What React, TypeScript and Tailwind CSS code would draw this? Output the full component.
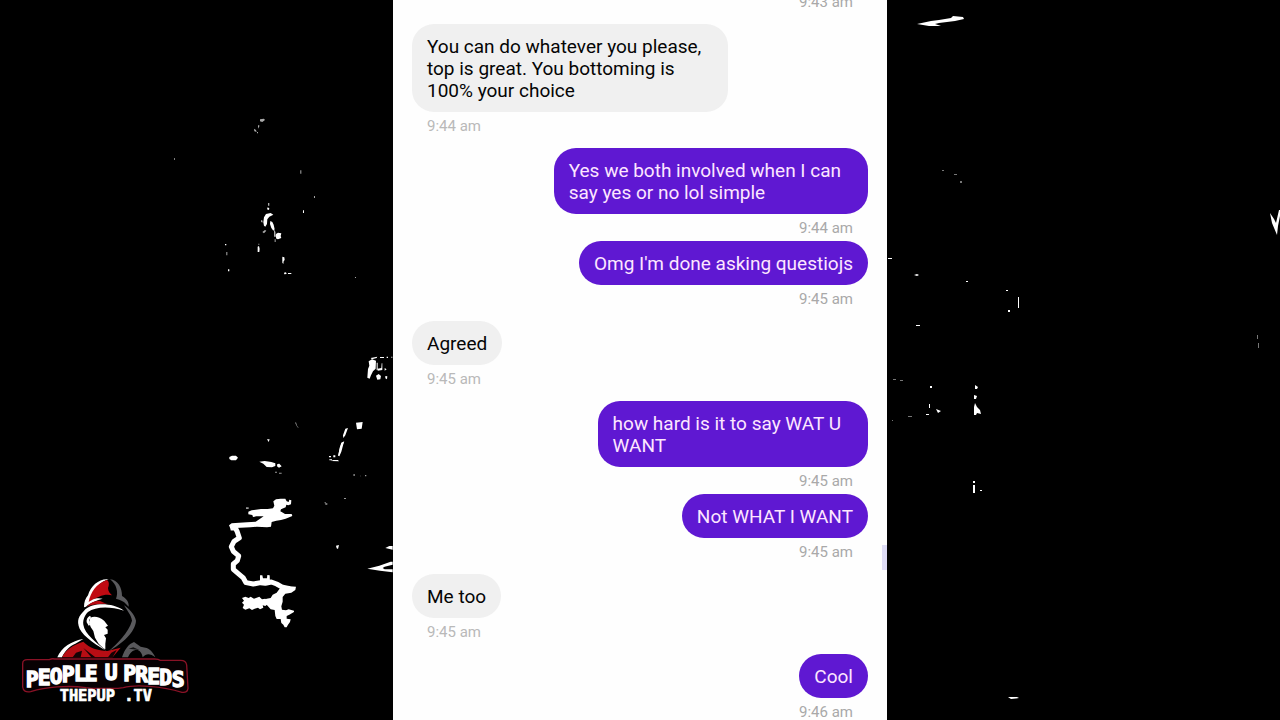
import React from "react";

type Message = { from: "them" | "me"; lines: string[]; time: string };

const messages: Message[] = [
  { from: "them", lines: ["You can do whatever you please,", "top is great. You bottoming is", "100% your choice"], time: "9:44 am" },
  { from: "me", lines: ["Yes we both involved when I can", "say yes or no lol simple"], time: "9:44 am" },
  { from: "me", lines: ["Omg I'm done asking questiojs"], time: "9:45 am" },
  { from: "them", lines: ["Agreed"], time: "9:45 am" },
  { from: "me", lines: ["how hard is it to say WAT U", "WANT"], time: "9:45 am" },
  { from: "me", lines: ["Not WHAT I WANT"], time: "9:45 am" },
  { from: "them", lines: ["Me too"], time: "9:45 am" },
  { from: "me", lines: ["Cool"], time: "9:46 am" },
];

function Time({ children, mine }: { children: string; mine: boolean }) {
  return (
    <time className={`mt-1 mb-[3px] px-[15px] text-[15px] leading-5 ${mine ? "text-[#a9a9a9]" : "text-[#b9b9b9]"}`}>
      {children}
    </time>
  );
}

function Bubble({ message, spaced }: { message: Message; spaced: boolean }) {
  const mine = message.from === "me";
  return (
    <li className={`flex flex-col ${mine ? "items-end" : "items-start"} ${spaced ? "mt-[9px]" : ""}`}>
      <p
        className={`rounded-[22px] pt-3 pb-2.5 pl-[15px] text-[19px] leading-[22px] whitespace-nowrap ${
          message.lines.length > 1 ? "pr-[27px]" : "pr-[15px]"
        } ${mine ? "bg-[#5f18d2] text-[#fde6ff]" : "bg-[#f0f0f0] text-[#050505]"}`}
      >
        {message.lines.map((line, i) => (
          <React.Fragment key={line}>
            {i > 0 && <br />}
            {line}
          </React.Fragment>
        ))}
      </p>
      <Time mine={mine}>{message.time}</Time>
    </li>
  );
}

function Backdrop() {
  return (
    <svg
      aria-hidden="true"
      viewBox="0 0 1280 720"
      preserveAspectRatio="xMidYMid slice"
      className="absolute inset-0 h-full w-full"
      fill="#fff"
    >
      <g transform="translate(210 440) scale(.3333)">
        <path d="M190 184l8-6 14-2 14 0 4 8 6 2 2-7 6 2-1 12-8 3-6-2-2 8-14 6-2 6 8 4 6 4 20 0 2 6-20 8-14 4-14 2-14 4-2 14-12 2-30-2-20 2-44 2-14 6-6-14 8-6 46-3 26-2 12-8 12-8-22 0-10 2-2-6-12-2 0-8 10-4 28-4 20 0 16-2 4-8z" />
        <path
          d="M62 264l14 0 6 12 6 18-16 10-8 16 6 14 16 14-4 14-12 10 0 16 14 12 16 14 8 14 22 4 22-4 14 2 18-4 16 6 18 10 22 4"
          fill="none"
          stroke="#fff"
          strokeWidth="15"
          strokeLinejoin="round"
        />
        <path d="M150 406l7 0 2 9 12 0 1-10 7 1 1 20-30 2zM212 442l16-4 30 2-2 10-12 8-18 3-8 10 0 14 -4 14 2 10 12 2 8-3 16 4 0 4-14 8-8 4 0 8 12 2-2 8-6 8-4 8-6 0-4-8-6-5-2-12-12 0-4-9-2-18-12-2-12-14-10-5 0-8 10-5 12-2 6-10 12-6z" />
        <path d="M96 474l10-4 10 4 6-4 10 6 16-6 8 8 10-2 4 5-4 7 8 4-8 6-8-2 2 7-10 5-6-5-10 3-8 4-8-5-12 4-8-5 4-10-6-6 6-6z" />
        <path d="M58 51l8-4 12 0 6 6-6 8-14 0-6-4zM148 65l16-2 20 3 12 4 0 8-10 4-16-1-10-10zM202 72l6-1 7 8-8 4-6-4zM171-2h8l-3 8zM378 317l9-2-3 12-4-2z" />
        <path d="M395 8l8-4-10 22-4 20-5 2 4-18zM357 48h6v4h-6zM370 46h6v6h-6zM358 58h8v3h-8zM370 60l14 0 3 4-24-1z" />
        <path d="M472 386l36-9 34-12h6v9l-24 6-6 4 6 4 24 0v9l-38-5zM526 324l12-6h10v11z" />
        <path d="M430 103h5v4h-5zM450 107h2v2h-2zM465 105h4v4h-4zM344 186h3v4h-3zM346 190h6v4h-6zM402 174h6v3h-6zM108 202h8v5h-8zM195 95h6v3h-6zM207 98h8v3h-8z" fill="#999" />
      </g>
      <g transform="translate(150 100) scale(.3333)">
        <path d="M342 352l6-10 14-3 8 5-12 6-6 8-1 14-5 8-4-3-2-10zM361 363l6 3 4 8 3 14-4 4-6-8-4-12zM353 322l5 3-1 5-6-2zM378 402l6-4 10 2-2 8 2 6-10 4-5-2-2-8zM373 388l3 8 0 14-3 0zM323 440l4-2 2 8-1 10-5 0zM397 470l6 2 1 8-3 4-1 8-3-4zM402 518l6-1 2 5-7 1zM414 519h10v3h-10zM459 331h3v8h-3zM225 432h4v4h-4zM234 508h4v6h-4z" />
        <path d="M330 58l12-2 3 4-8 6-7-2zM312 86l6 4 2 6-7-2zM324 75l5 2-5 9zM321 96h3v4h-3zM354 309h4v8h-4zM333 360l5 2-1 6-4-3zM337 396l8-6 4 2-7 8zM229 456h3v10h-3zM374 418h3v8h-3zM451 211h3v10h-3zM492 288h3v6h-3zM72 175h3v4h-3zM615 531h3v3h-3zM325 431h3v3h-3z" fill="#aaa" />
      </g>
      <g transform="translate(280 330) scale(.3333)">
        <path d="M266 94l10-6 12 4-1 24-8 8-6 12-4 10-7-3 2-26 4-10zM272 84l20-4-2 4-14 4zM300 81h12v3h-12zM320 80h4v4h-4zM334 80h3v3h-3zM290 98h3v20l-3 3zM293 116l11-2 1-14h2v20l-14 2zM314 114l6 4-6 4zM288 137l8-5 7 6-2 10-9 1zM316 138l6 1-1 9-5-3zM228 278l20-2-3 20-14 2zM196 296l8-2-8 22-6 8-1-8zM184 338l8-3-8 30-6 14-3-2 4-24z" />
        <path d="M45 278l3-1 4 12 5 4-5-1z" fill="#888" />
      </g>
      <path d="M917 24l14-3 8-1 12-2 2-2 10 1 1 2-9 2-16 2-4 1 6 2-12 0z" />
      <path d="M1270 213l4 6 2 4 3-13h1v6l-2 10-1 9-5-12z" />
      <path d="M888 258h4v1h-4zM914 275l3-1 2 1-2 1zM1018 297h1v11h-1zM1008 310h2v2h-2zM1006 290h2v1h-2zM966 281h2v1h-2zM916 325h4v1h-4zM975 385l3 2-1 2h-2zM974 395l3 1-1 3h-2zM975 403l2 4 3 3 1 4-4-1-1 2h-2v-8zM929 404h1v4h-1zM926 414h3v1h-3zM936 409l5 2-3 2zM930 386h2v2h-2zM973 481h2v2h-2zM973 485h2v8h-2zM980 490h2v1h-2zM1008 697l9 0 2 1-8 1z" />
      <path d="M942 170h2v1h-2zM954 174h3v1h-3zM960 181h2v2h-2zM893 379h3v1h-3zM900 380h3v1h-3zM908 416h4v1h-4zM892 420h1v1h-1zM1257 335h1v4h-1zM1258 343h1v5h-1z" fill="#777" />
    </svg>
  );
}

function Logo() {
  return (
    <svg
      role="img"
      aria-label="People U Preds"
      viewBox="0 0 570 435"
      className="absolute bottom-[5px] left-2.5 h-[145px] w-[190px]"
    >
      <path d="M222 112c0-16 4-26 12-36 8-30 36-52 62-48-28 8-44 28-54 68l-14 14z" fill="#fff" />
      <path d="M236 96c6-30 22-54 54-66 8 4 8 14 4 24 0 10 6 16 12 22-20-6-40 2-70 20z" fill="#c00a12" />
      <path d="M300 28c24 2 36 26 36 50 14 8 22 20 20 32l-8-8c-6-8-16-12-30-16 8-18 2-44-18-58z" fill="#5a5a5d" />
      <path d="M228 108c12-20 30-27 50-22-18 4-34 12-50 22z" fill="#fff" />
      <path d="M230 110c10-12 24-18 36-18 12 2 14 8 34 10-24-2-50 0-70 8z" fill="#b80a12" />
      <path
        d="M342 122c-36-26-94-24-116-4-14 16-26 26-20 50 4 22 40 50 82 74-28-24-64-50-68-78-2-16 6-30 14-38 22-16 64-18 108-4z"
        fill="#fff"
      />
      <path d="M342 106c14 8 32 28 36 46-2 34-42 70-80 90 22-20 58-54 68-90-2-16-16-32-24-46z" fill="#5a5a5d" />
      <path
        d="M241 143q20-8 42 10l11 14-8 5 7 7 0 12-11 4 6 10-2 16 0 17-6-3-14-14-11-18-5-20-8-12-5-14z"
        fill="#fff"
      />
      <path d="M240 137q-12 6-10 20l6 10 4-2-3-14 6-9z" fill="#fff" />
      <path d="M142 262c12-30 44-50 78-55l-24 14c-18 8-32 22-40 41z" fill="#fff" />
      <path d="M156 262c10-22 34-38 64-47 20 20 42 26 72 28l40-10-24 29h-152z" fill="#b80d14" />
      <path d="M188 262l10-14 18-6-4 20zM244 262l-24-28 36 28zM294 262l10-14 16-8-12 22z" fill="#150305" />
      <path d="M336 262c8-24 20-40 36-46l20 14 18 4c14 6 20 16 26 28-14-10-26-14-38 0-2-14-10-22-18-22-12 0-20 8-26 22z" fill="#58585b" />
      <path d="M356 236l14-4 18 8-18-2z" fill="#111" />
      <path
        d="M134 267h300q12 0 16 4h62q16 0 18 14l4 70q-2 14-18 12-44-14-98-18-50-4-78 4l-16 2h-80l-16-2c-54-8-120-2-166 12q-22 4-24-14l0-70q0-12 14-12h66q8-4 16-2z"
        fill="#080103"
        stroke="#8a1226"
        strokeWidth="4"
      />
      <g
        fill="#fff"
        stroke="#fff"
        strokeWidth="4"
        strokeLinejoin="miter"
        fontWeight="700"
        fontFamily='"DejaVu Sans Mono", monospace'
      >
        <text x="47 83 119 155 191 224" y="350 345 341 337 334 333" fontSize="64">PEOPLE</text>
        <text x="284" y="330" fontSize="64">U</text>
        <text x="340 376 412 448 485" y="334 337 341 345 350" fontSize="64">PREDS</text>
      </g>
      <text x="149" y="394" fill="#fff" stroke="#fff" strokeWidth="2" fontSize="46" fontWeight="700" fontFamily='"DejaVu Sans Mono", monospace'>
        THEPUP .TV
      </text>
    </svg>
  );
}

export default function App() {
  return (
    <div className="relative flex h-screen justify-center overflow-hidden bg-black font-[Roboto,sans-serif]">
      <Backdrop />
      <main className="relative w-full max-w-[494px] overflow-hidden bg-[#fefefe] px-[19px]">
        <ul className="-mt-3">
          <li className="flex flex-col items-end">
            <Time mine>9:43 am</Time>
          </li>
          {messages.map((message, i) => (
            <Bubble key={i} message={message} spaced={i === 0 || messages[i - 1].from !== message.from} />
          ))}
        </ul>
        <div className="absolute top-[545px] right-0 h-[25px] w-[5px] bg-[#dedcf5]" />
      </main>
      <Logo />
    </div>
  );
}
